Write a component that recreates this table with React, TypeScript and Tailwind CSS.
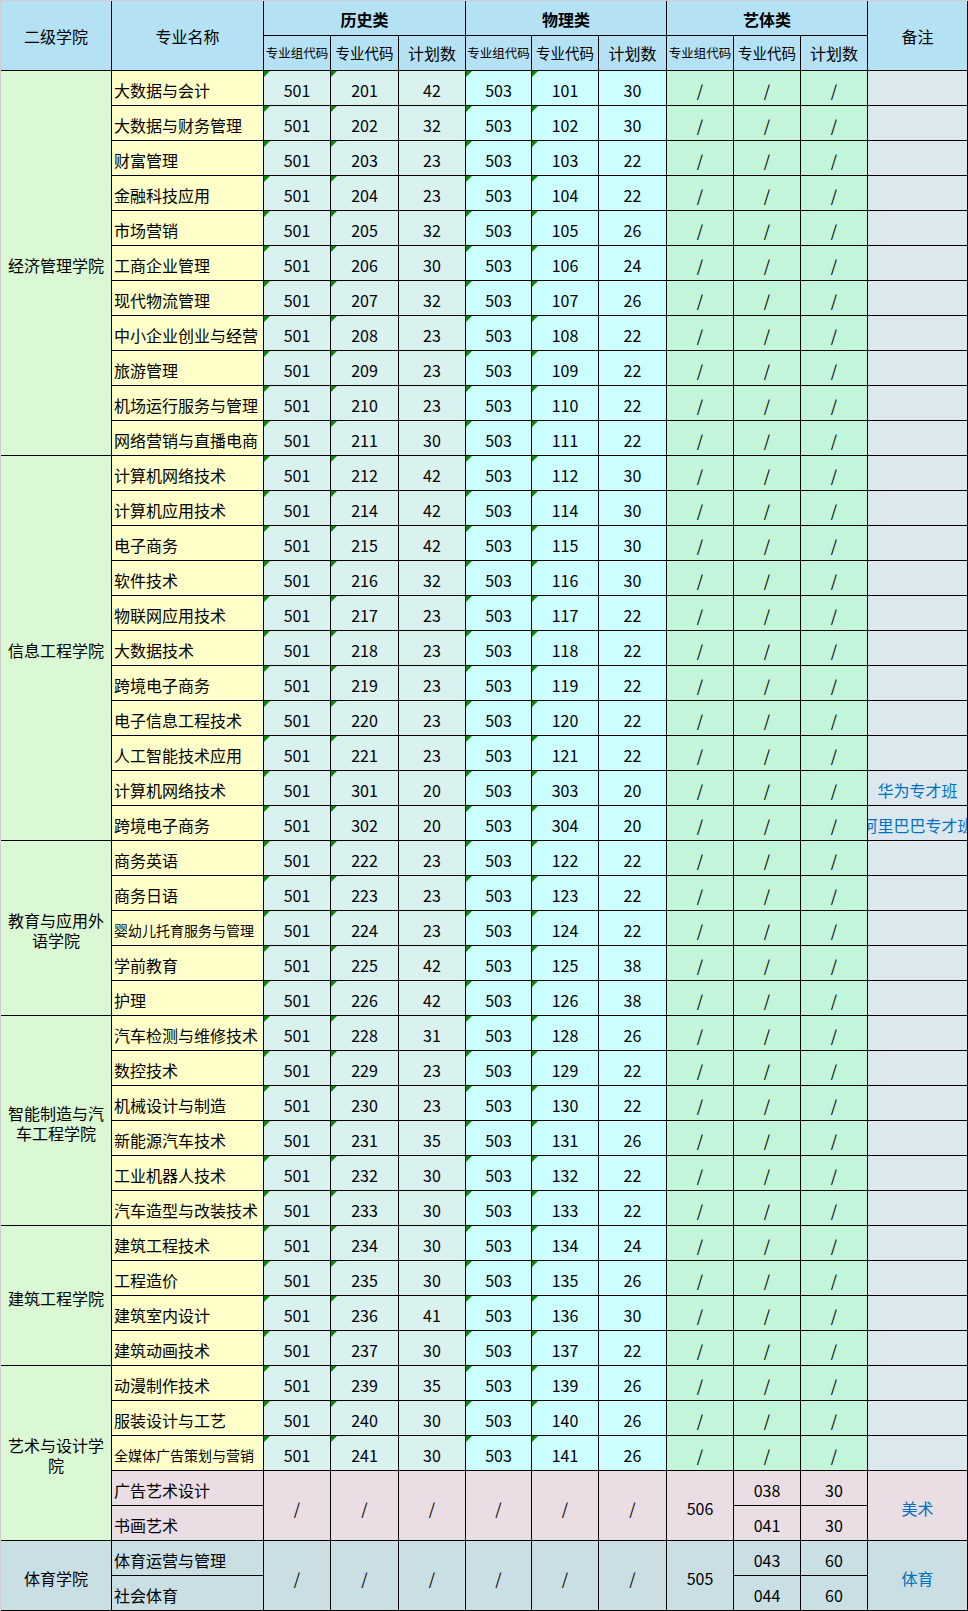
import clsx from 'clsx'

type Row = [string, string, string, string, string, string?]

interface Group {
  college: string
  rows: Row[]
}

const GROUPS: Group[] = [
  {
    college: '经济管理学院',
    rows: [
      ['大数据与会计', '201', '42', '101', '30'],
      ['大数据与财务管理', '202', '32', '102', '30'],
      ['财富管理', '203', '23', '103', '22'],
      ['金融科技应用', '204', '23', '104', '22'],
      ['市场营销', '205', '32', '105', '26'],
      ['工商企业管理', '206', '30', '106', '24'],
      ['现代物流管理', '207', '32', '107', '26'],
      ['中小企业创业与经营', '208', '23', '108', '22'],
      ['旅游管理', '209', '23', '109', '22'],
      ['机场运行服务与管理', '210', '23', '110', '22'],
      ['网络营销与直播电商', '211', '30', '111', '22'],
    ],
  },
  {
    college: '信息工程学院',
    rows: [
      ['计算机网络技术', '212', '42', '112', '30'],
      ['计算机应用技术', '214', '42', '114', '30'],
      ['电子商务', '215', '42', '115', '30'],
      ['软件技术', '216', '32', '116', '30'],
      ['物联网应用技术', '217', '23', '117', '22'],
      ['大数据技术', '218', '23', '118', '22'],
      ['跨境电子商务', '219', '23', '119', '22'],
      ['电子信息工程技术', '220', '23', '120', '22'],
      ['人工智能技术应用', '221', '23', '121', '22'],
      ['计算机网络技术', '301', '20', '303', '20', '华为专才班'],
      ['跨境电子商务', '302', '20', '304', '20', '阿里巴巴专才班'],
    ],
  },
  {
    college: '教育与应用外语学院',
    rows: [
      ['商务英语', '222', '23', '122', '22'],
      ['商务日语', '223', '23', '123', '22'],
      ['婴幼儿托育服务与管理', '224', '23', '124', '22'],
      ['学前教育', '225', '42', '125', '38'],
      ['护理', '226', '42', '126', '38'],
    ],
  },
  {
    college: '智能制造与汽车工程学院',
    rows: [
      ['汽车检测与维修技术', '228', '31', '128', '26'],
      ['数控技术', '229', '23', '129', '22'],
      ['机械设计与制造', '230', '23', '130', '22'],
      ['新能源汽车技术', '231', '35', '131', '26'],
      ['工业机器人技术', '232', '30', '132', '22'],
      ['汽车造型与改装技术', '233', '30', '133', '22'],
    ],
  },
  {
    college: '建筑工程学院',
    rows: [
      ['建筑工程技术', '234', '30', '134', '24'],
      ['工程造价', '235', '30', '135', '26'],
      ['建筑室内设计', '236', '41', '136', '30'],
      ['建筑动画技术', '237', '30', '137', '22'],
    ],
  },
]

const ART_ROWS: Row[] = [
  ['动漫制作技术', '239', '35', '139', '26'],
  ['服装设计与工艺', '240', '30', '140', '26'],
  ['全媒体广告策划与营销', '241', '30', '141', '26'],
]

const ROW_SPAN: Record<number, string> = {
  2: 'row-span-2',
  4: 'row-span-4',
  5: 'row-span-5',
  6: 'row-span-6',
  11: 'row-span-11',
}

const HEAD = 'bg-[#b4e1f3]'
const COLLEGE = 'bg-[#daf8d3]'
const NAME = 'bg-[#ffffca]'
const HIST = 'bg-[#d9f1ef]'
const PHYS = 'bg-[#ccffff]'
const ART = 'bg-[#c2f5da]'
const NOTE = 'bg-[#dde8ee]'
const PINK = 'bg-[#eadde4]'
const SPORT = 'bg-[#c9dfe4]'

function Cell({
  className,
  children,
  tri,
}: {
  className?: string
  children?: React.ReactNode
  tri?: boolean
}) {
  return (
    <div
      className={clsx(
        'relative flex items-center justify-center overflow-hidden whitespace-nowrap leading-none',
        className,
      )}
    >
      {tri && (
        <span className="absolute left-0 top-0 h-[6px] w-[6px] bg-[#0a8a0a] [clip-path:polygon(0_0,100%_0,0_100%)]" />
      )}
      {children}
    </div>
  )
}

function Name({ text, bg }: { text: string; bg: string }) {
  return (
    <Cell className={clsx('justify-start! pl-[2px] pt-1', bg, text.length >= 10 ? 'text-[14px]' : 'text-[16px]')}>
      {text}
    </Cell>
  )
}

function College({ name, span, bg }: { name: string; span: number; bg: string }) {
  return (
    <div
      className={clsx(
        'flex items-center justify-center px-[6px] pt-1 text-center text-[16px] leading-5',
        ROW_SPAN[span],
        bg,
      )}
    >
      {name}
    </div>
  )
}

function DataRow({ row }: { row: Row }) {
  const [name, code, plan, pcode, pplan, note] = row
  return (
    <>
      <Name text={name} bg={NAME} />
      <Cell className={clsx(HIST, 'pt-1')} tri>501</Cell>
      <Cell className={clsx(HIST, 'pt-1')} tri>{code}</Cell>
      <Cell className={clsx(HIST, 'pt-1')}>{plan}</Cell>
      <Cell className={clsx(PHYS, 'pt-1')} tri>503</Cell>
      <Cell className={clsx(PHYS, 'pt-1')} tri>{pcode}</Cell>
      <Cell className={clsx(PHYS, 'pt-1')}>{pplan}</Cell>
      <Cell className={clsx(ART, 'pt-1')}>/</Cell>
      <Cell className={clsx(ART, 'pt-1')}>/</Cell>
      <Cell className={clsx(ART, 'pt-1')}>/</Cell>
      <Cell className={clsx(NOTE, 'pt-1 text-[#0070c0]')}>{note}</Cell>
    </>
  )
}

// 艺体类の2行まとめ（美术・体育）
function SpecialRows({
  names,
  group,
  codes,
  plans,
  note,
  bg,
}: {
  names: [string, string]
  group: string
  codes: [string, string]
  plans: [string, string]
  note: string
  bg: string
}) {
  return (
    <>
      <Name text={names[0]} bg={bg} />
      {[0, 1, 2, 3, 4, 5].map((i) => (
        <Cell key={i} className={clsx('row-span-2 pt-1', bg)}>/</Cell>
      ))}
      <Cell className={clsx('row-span-2 pt-1', bg)}>{group}</Cell>
      <Cell className={clsx('pt-1', bg)}>{codes[0]}</Cell>
      <Cell className={clsx('pt-1', bg)}>{plans[0]}</Cell>
      <Cell className={clsx('row-span-2 pt-1 text-[#0070c0]', bg)}>{note}</Cell>
      <Name text={names[1]} bg={bg} />
      <Cell className={clsx('pt-1', bg)}>{codes[1]}</Cell>
      <Cell className={clsx('pt-1', bg)}>{plans[1]}</Cell>
    </>
  )
}

export default function App() {
  return (
    <div className="w-[968px] border-l border-t border-[#cfcfcf] bg-white font-['Noto_Sans_CJK_SC',sans-serif] text-[16px] text-black">
      <div className="grid grid-cols-[110px_151px_66px_67px_66px_65px_66px_67px_66px_66px_66px_99px] grid-rows-[repeat(46,34px)] gap-px bg-black pb-px pr-px">
        {/* ヘッダー */}
        <Cell className={clsx('row-span-2', HEAD)}>二级学院</Cell>
        <Cell className={clsx('row-span-2', HEAD)}>专业名称</Cell>
        <Cell className={clsx('col-span-3 pt-[2px] font-bold', HEAD)}>历史类</Cell>
        <Cell className={clsx('col-span-3 pt-[2px] font-bold', HEAD)}>物理类</Cell>
        <Cell className={clsx('col-span-3 pt-[2px] font-bold', HEAD)}>艺体类</Cell>
        <Cell className={clsx('row-span-2', HEAD)}>备注</Cell>
        {[0, 1, 2].map((i) => (
          <div key={i} className="contents">
            <Cell className={clsx('text-[12.5px]', HEAD)}>专业组代码</Cell>
            <Cell className={clsx('text-[14.5px]', HEAD)}>专业代码</Cell>
            <Cell className={HEAD}>计划数</Cell>
          </div>
        ))}

        {GROUPS.map((g) => (
          <div key={g.college} className="contents">
            <College name={g.college} span={g.rows.length} bg={COLLEGE} />
            {g.rows.map((r) => (
              <DataRow key={r[1]} row={r} />
            ))}
          </div>
        ))}

        <College name="艺术与设计学院" span={5} bg={COLLEGE} />
        {ART_ROWS.map((r) => (
          <DataRow key={r[1]} row={r} />
        ))}
        <SpecialRows
          names={['广告艺术设计', '书画艺术']}
          group="506"
          codes={['038', '041']}
          plans={['30', '30']}
          note="美术"
          bg={PINK}
        />

        <College name="体育学院" span={2} bg={SPORT} />
        <SpecialRows
          names={['体育运营与管理', '社会体育']}
          group="505"
          codes={['043', '044']}
          plans={['60', '60']}
          note="体育"
          bg={SPORT}
        />
      </div>
    </div>
  )
}
